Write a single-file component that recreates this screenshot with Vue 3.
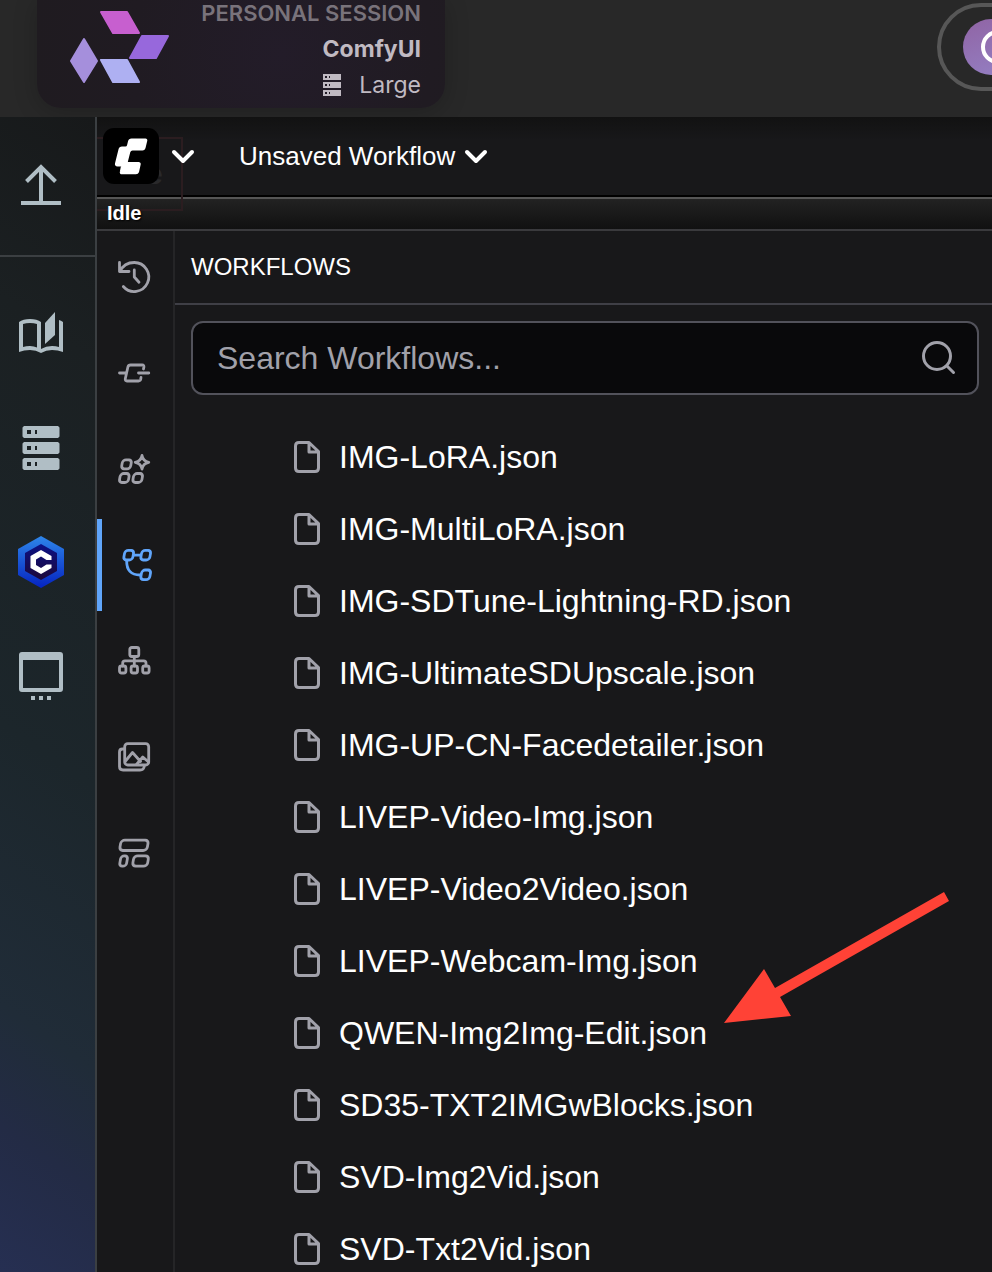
<script setup>
import { ref } from 'vue'

const query = ref('')
const files = [
  'IMG-LoRA.json',
  'IMG-MultiLoRA.json',
  'IMG-SDTune-Lightning-RD.json',
  'IMG-UltimateSDUpscale.json',
  'IMG-UP-CN-Facedetailer.json',
  'LIVEP-Video-Img.json',
  'LIVEP-Video2Video.json',
  'LIVEP-Webcam-Img.json',
  'QWEN-Img2Img-Edit.json',
  'SD35-TXT2IMGwBlocks.json',
  'SVD-Img2Vid.json',
  'SVD-Txt2Vid.json',
]
const highlighted = 'QWEN-Img2Img-Edit.json'
</script>

<template>
  <div class="page">
    <header class="header">
      <section class="session">
        <svg class="brand" width="100" height="74" viewBox="0 0 100 74" stroke-width="2" stroke-linejoin="round" aria-hidden="true">
          <path d="M32 2H58L70 23H44Z" fill="#c75fcf" stroke="#c75fcf" />
          <path d="M73 26H99L87 48H61Z" fill="#9768dc" stroke="#9768dc" />
          <path d="M32 50H58L70 72H44Z" fill="#aeb0f2" stroke="#aeb0f2" />
          <path d="M15 29L28 51L15 72L2 51Z" fill="#a58fdc" stroke="#a58fdc" />
        </svg>
        <div class="session-text">
          <span class="session-kind">PERSONAL SESSION</span>
          <strong class="session-name">ComfyUI</strong>
          <span class="session-size">
            <svg width="18" height="22" viewBox="0 0 18 22" aria-hidden="true">
              <path fill="#c0bac2" fill-rule="evenodd" d="M0 0H18V6H0ZM2 2V4H4V2ZM6 2V4H7V2ZM0 8H18V14H0ZM2 10V12H4V10ZM6 10V12H7V10ZM0 16H18V22H0ZM2 18V20H4V18ZM6 18V20H7V18Z" />
            </svg>
            Large
          </span>
        </div>
      </section>
      <button class="account" type="button" aria-label="Account">
        <span class="avatar">
          <svg width="56" height="56" viewBox="0 0 56 56" aria-hidden="true">
            <circle cx="35" cy="28" r="15" fill="none" stroke="#fff" stroke-width="4" />
          </svg>
        </span>
      </button>
    </header>

    <div class="body">
      <nav class="dock" aria-label="Session">
        <div class="dock-top">
          <button type="button" aria-label="Upload">
            <svg width="48" height="54" viewBox="0 0 48 54" fill="none" stroke="#b0bec5" stroke-width="4">
              <path d="M4 44H44M24 44V9M9.500 22.500L24 8L38.500 22.500" />
            </svg>
          </button>
        </div>
        <div class="dock-items">
          <button type="button" aria-label="Guides">
            <svg width="48" height="54" viewBox="0 0 48 54" fill="#b0bec5">
              <path fill-rule="evenodd" d="M2 15Q6 12 13 12Q20 12 24 15V42Q29 39 35 39Q39 39 42 40V13Q44 13.500 46 15V45Q41 43 35 43Q29 43 24 46Q19 43 13 43Q7 43 2 45ZM6 17V40Q9 39 13 39Q17 39 20 40.500V17Q17 16 13 16Q9 16 6 17Z" />
              <path d="M28 16L38 5V28L28 37Z" />
            </svg>
          </button>
          <button type="button" aria-label="Machines">
            <svg width="48" height="54" viewBox="0 0 48 54">
              <path fill="#b0bec5" fill-rule="evenodd" d="M7 5H41L42.500 6.500V15.500L41 17H7L5.500 15.500V6.500ZM10 9V13H14V9ZM18 9V13H20V9ZM7 21H41L42.500 22.500V31.500L41 33H7L5.500 31.500V22.500ZM10 25V29H14V25ZM18 25V29H20V25ZM7 37H41L42.500 38.500V47.500L41 49H7L5.500 47.500V38.500ZM10 41V45H14V41ZM18 41V45H20V41Z" />
            </svg>
          </button>
          <button type="button" aria-label="ComfyUI">
            <svg width="48" height="54" viewBox="0 0 48 54">
              <defs>
                <linearGradient id="hex" x1="0" y1="0" x2="0" y2="1">
                  <stop offset="0" stop-color="#2e86ea" />
                  <stop offset="1" stop-color="#0523c0" />
                </linearGradient>
                <linearGradient id="core" x1="0" y1="0" x2="0" y2="1">
                  <stop offset="0" stop-color="#0b1187" />
                  <stop offset="1" stop-color="#1d0838" />
                </linearGradient>
              </defs>
              <path d="M24 1L47 14V40L24 53L1 40V14Z" fill="url(#hex)" />
              <path d="M24 9L40 18V36L24 45L8 36V18Z" fill="url(#core)" />
              <path d="M24 15L34.500 21V25H29.500L24 21.500L19 24.500V30L24 33L29.500 29.500H34.500V33L24 39L13.500 33V21Z" fill="#fff" />
            </svg>
          </button>
          <button type="button" aria-label="Desktop">
            <svg width="48" height="54" viewBox="0 0 48 54" fill="#b0bec5">
              <path fill-rule="evenodd" d="M5 3H43Q46 3 46 6V40Q46 43 43 43H5Q2 43 2 40V6Q2 3 5 3ZM6 11V39H42V11Z" />
              <path d="M14 47H18V51H14ZM22 47H26V51H22ZM30 47H34V51H30Z" />
            </svg>
          </button>
        </div>
      </nav>

      <main class="app">
        <div class="menubar">
          <span class="ghost" aria-hidden="true">Idle</span>
          <button class="menu-logo" type="button" aria-label="Main menu">
            <svg width="56" height="56" viewBox="0 0 56 56">
              <rect width="56" height="56" rx="11" fill="#000" />
              <path d="M28.500 11.500H42.500Q43.500 11.500 43.300 12.500L41.500 20Q41 21.500 39.500 21.500H29.500Q27 21.500 26.300 24L24 33Q23.500 35 25.500 35H35.500Q37 35 36.700 36.300L35 44Q34.500 45.300 33 45.300H19Q17.500 45.300 17.800 44L18.800 39Q19 37.500 17.500 37.500H14.500Q12.500 37.500 13 35.500L16.500 21.500Q17 19.500 19 19.500H22.500Q24.500 19.500 25 17.500L26 13.500Q26.500 11.500 28.500 11.500Z" fill="#fff" stroke="#fff" stroke-width="2" stroke-linejoin="round" />
            </svg>
            <svg width="24" height="16" viewBox="0 0 24 16" fill="none" stroke="#fff" stroke-width="4" stroke-linecap="round" stroke-linejoin="round">
              <path d="M3 4L12 13L21 4" />
            </svg>
          </button>
          <button class="menu-title" type="button">
            Unsaved Workflow
            <svg width="24" height="16" viewBox="0 0 24 16" fill="none" stroke="#fff" stroke-width="4" stroke-linecap="round" stroke-linejoin="round" aria-hidden="true">
              <path d="M3 4L12 13L21 4" />
            </svg>
          </button>
        </div>
        <div class="status"><span class="status-text">Idle</span></div>

        <div class="workspace">
          <nav class="rail" aria-label="Panels">
            <button type="button" aria-label="Queue">
              <svg class="icon" viewBox="0 0 36 36">
                <path d="M3.500 3.500V12.500H13M4 12.500C6.500 7 12 3.500 18.300 3.500A14.500 14.500 0 1 1 7.300 27.500M18.300 11V18L23 23.300" />
              </svg>
            </button>
            <button type="button" aria-label="Nodes">
              <svg class="icon" viewBox="0 0 36 36">
                <path d="M3.500 18H9M22.500 18H32.800M27.500 14L27.900 12Q28.200 10 26.300 10H14.500Q12.400 10 11.900 12L9.300 23.700Q9 26 11 26H22.500Q24.300 26 24.700 24.300L25 22.500" />
              </svg>
            </button>
            <button type="button" aria-label="Models">
              <svg class="icon" viewBox="0 0 36 36">
                <rect x="-4.500" y="-4.500" width="9" height="9" rx="3" transform="translate(10.500 13.300) skewX(-10)" />
                <rect x="-4.500" y="-4.500" width="9" height="9" rx="3" transform="translate(8.300 27) skewX(-10)" />
                <rect x="-4.500" y="-4.500" width="9" height="9" rx="3" transform="translate(21.700 27) skewX(-10)" />
                <path d="M26 4.500Q27 10.300 32.800 11.300Q27 12.300 26 18.100Q25 12.300 19.200 11.300Q25 10.300 26 4.500Z" />
              </svg>
            </button>
            <button class="active" type="button" aria-label="Workflows" aria-current="page">
              <svg class="icon" viewBox="0 0 36 36">
                <rect x="-4.500" y="-4.800" width="9" height="9.600" rx="3" transform="translate(12.700 8.200) skewX(-10)" />
                <rect x="-4.500" y="-4.800" width="9" height="9.600" rx="3" transform="translate(29.700 8.200) skewX(-10)" />
                <rect x="-4.500" y="-4.800" width="9" height="9.600" rx="3" transform="translate(29.700 27.800) skewX(-10)" />
                <path d="M18 8.200H24.500M10.700 14C10.500 23 15 28 24 28" />
              </svg>
            </button>
            <button type="button" aria-label="Subgraphs">
              <svg class="icon" viewBox="0 0 36 36">
                <rect x="13.800" y="4.500" width="9" height="9" rx="2" />
                <rect x="3.500" y="23" width="6.400" height="7" rx="2" />
                <rect x="15.100" y="23" width="6.400" height="7" rx="2" />
                <rect x="26.700" y="23" width="6.400" height="7" rx="2" />
                <path d="M18.300 13.500V23M6.700 23V20Q6.700 17.800 9 17.800H27.700Q30 17.800 30 20V23" />
              </svg>
            </button>
            <button type="button" aria-label="Media">
              <svg class="icon" viewBox="0 0 36 36">
                <rect x="8.700" y="4.700" width="24" height="21.300" rx="3" />
                <path d="M8 10H6.500Q3.500 10 3.500 13V27.500Q3.500 31 7 31H24Q28 31 28.300 27M9.500 22L16.500 13.500L24.500 22.500M20.500 25.500L26.800 18L32.500 23" />
              </svg>
            </button>
            <button type="button" aria-label="Templates">
              <svg class="icon" viewBox="0 0 36 36">
                <rect x="-13.700" y="-5.200" width="27.400" height="10.400" rx="3.500" transform="translate(18 10.300) skewX(-10)" />
                <rect x="-3.400" y="-5.200" width="6.800" height="10.400" rx="3" transform="translate(7.600 26) skewX(-10)" />
                <rect x="-7.400" y="-5.200" width="14.800" height="10.400" rx="3.500" transform="translate(24.600 26) skewX(-10)" />
              </svg>
            </button>
          </nav>

          <section class="panel">
            <h1 class="panel-title">WORKFLOWS</h1>
            <label class="search">
              <input v-model="query" type="text" placeholder="Search Workflows..." aria-label="Search Workflows" />
              <svg width="36" height="36" viewBox="0 0 36 36" fill="none" stroke="#a1a1aa" stroke-width="3" stroke-linecap="round" aria-hidden="true">
                <circle cx="16" cy="16" r="13.500" />
                <path d="M26 26L32.500 32.500" />
              </svg>
            </label>
            <ul class="files">
              <li v-for="file in files" :key="file" class="file">
                <svg width="28" height="34" viewBox="0 0 28 34" fill="none" stroke="#a1a1aa" stroke-width="3" stroke-linejoin="round" aria-hidden="true">
                  <path d="M6 2.500H16L25.500 11.500V28Q25.500 31.500 22 31.500H6Q2.500 31.500 2.500 28V6Q2.500 2.500 6 2.500ZM16 2.500V12H25.500" />
                </svg>
                <span class="file-name">{{ file }}</span>
                <svg v-if="file === highlighted" class="arrow" width="225" height="131" viewBox="0 0 225 131" aria-hidden="true">
                  <path d="M0 131L40 77L51 96L220 0L225 9L56 105L67 124Z" fill="#ff4236" />
                </svg>
              </li>
            </ul>
          </section>
        </div>
      </main>
    </div>
  </div>
</template>

<style>
body {
  margin: 0;
  background: #18181a;
}
</style>

<style scoped>
.page {
  display: flex;
  flex-direction: column;
  height: 100vh;
  overflow: hidden;
  color: #fff;
  font-family: "Liberation Sans", Arial, sans-serif;
}
button {
  display: flex;
  align-items: center;
  padding: 0;
  border: 0;
  background: none;
  color: inherit;
  font: inherit;
}
svg {
  display: block;
  flex: none;
}
.header {
  display: flex;
  flex: none;
  justify-content: space-between;
  align-items: flex-start;
  height: 117px;
  padding-left: 37px;
  overflow: hidden;
  background: #282828;
}
.session {
  display: flex;
  justify-content: space-between;
  box-sizing: border-box;
  width: 408px;
  height: 108px;
  padding: 0 24px 0 32px;
  border-radius: 0 0 24px 24px;
  background: radial-gradient(circle at 60% 50%, #231c29, #201b22 60%, #1f1b20);
  box-shadow: 0 4px 24px rgba(0, 0, 0, 0.2);
  font-family: Inter, sans-serif;
}
.brand {
  margin-top: 10px;
}
.session-text {
  display: flex;
  flex-direction: column;
  align-items: flex-end;
  font-size: 23px;
  line-height: 36px;
  color: #c0bac2;
}
.session-kind {
  height: 31px;
  line-height: 26px;
  font-size: 22px;
  font-weight: 600;
  color: #79737b;
}
.session-name {
  font-weight: 700;
}
.session-size {
  display: flex;
  align-items: center;
  gap: 18px;
}
.account {
  flex: none;
  box-sizing: border-box;
  width: 120px;
  height: 88px;
  margin: 3px -65px 0 0;
  padding-left: 22px;
  border: 4px solid #575757;
  border-radius: 44px;
}
.avatar {
  overflow: hidden;
  border-radius: 50%;
  background: linear-gradient(160deg, #9064a4, #9480c4);
}
.body {
  display: flex;
  flex: 1;
  min-height: 0;
}
.dock {
  flex: none;
  width: 95px;
  border-right: 2px solid #3b3f42;
  background: linear-gradient(215deg, #17191a 0, #1b2022 20%, #1c262b 55%, #202c38 78%, #232b45 88%, #262f52 100%);
}
.dock button {
  justify-content: center;
  width: 82px;
  height: 114px;
}
.dock-top {
  padding: 12px 0;
  border-bottom: 2px solid #3b3f42;
}
.dock-items {
  padding-top: 20px;
}
.app {
  display: flex;
  flex: 1;
  flex-direction: column;
  min-width: 0;
}
.menubar {
  position: relative;
  display: flex;
  flex: none;
  align-items: center;
  gap: 44px;
  height: 78px;
  padding-left: 6px;
  border-bottom: 2px solid #000;
  background: linear-gradient(#121212, #18181a 30%);
}
.menu-logo {
  position: relative;
  gap: 12px;
}
.menu-title {
  position: relative;
  gap: 9px;
  font-size: 26px;
}
.ghost {
  position: absolute;
  top: 20px;
  left: 0;
  box-sizing: border-box;
  width: 86px;
  height: 74px;
  padding: 18px 0 0 14px;
  border: 2px solid #2b1d20;
  border-left: 0;
  font-size: 30px;
  font-weight: 700;
  line-height: 34px;
  color: #29292b;
}
.status {
  flex: none;
  height: 30px;
  padding-left: 10px;
  border-top: 2px solid #555;
  border-bottom: 2px solid #3a3a3d;
  background: linear-gradient(#222, #111);
  font-size: 20px;
  font-weight: 700;
  line-height: 28px;
  text-shadow: 1px 1px 2px #000;
}
.status-text {
  position: relative;
}
.workspace {
  display: flex;
  flex: 1;
  min-height: 0;
  background: #18181a;
}
.rail {
  display: flex;
  flex: none;
  flex-direction: column;
  gap: 4px;
  width: 76px;
  border-right: 2px solid #252527;
  color: #a1a1aa;
}
.rail button {
  flex: none;
  box-sizing: border-box;
  width: 100%;
  height: 92px;
  padding-left: 19px;
}
.rail .active {
  padding-left: 14px;
  border-left: 5px solid #60a5fa;
  color: #60a5fa;
}
.icon {
  width: 36px;
  height: 36px;
  overflow: visible;
  fill: none;
  stroke: currentColor;
  stroke-width: 2.8;
  stroke-linecap: round;
  stroke-linejoin: round;
}
.panel {
  flex: 1;
  min-width: 0;
}
.panel-title {
  margin: 0;
  padding: 0 16px;
  border-bottom: 2px solid #3f3f46;
  font-size: 24px;
  font-weight: 400;
  line-height: 72px;
}
.search {
  display: flex;
  align-items: center;
  box-sizing: border-box;
  height: 74px;
  margin: 16px 13px 0 16px;
  padding: 0 20px 0 24px;
  border: 2px solid #52525b;
  border-radius: 12px;
  background: #09090b;
}
.search input {
  flex: 1;
  min-width: 0;
  padding: 0;
  border: 0;
  outline: 0;
  background: none;
  color: #fff;
  font: inherit;
  font-size: 32px;
}
.search input::placeholder {
  color: #a1a1aa;
  opacity: 1;
}
.files {
  margin: 26px 0 0;
  padding: 0;
  list-style: none;
}
.file {
  position: relative;
  display: flex;
  align-items: center;
  gap: 18px;
  height: 72px;
  padding-left: 118px;
  font-size: 32px;
}
.arrow {
  position: absolute;
  top: -105px;
  left: 549px;
}
</style>
